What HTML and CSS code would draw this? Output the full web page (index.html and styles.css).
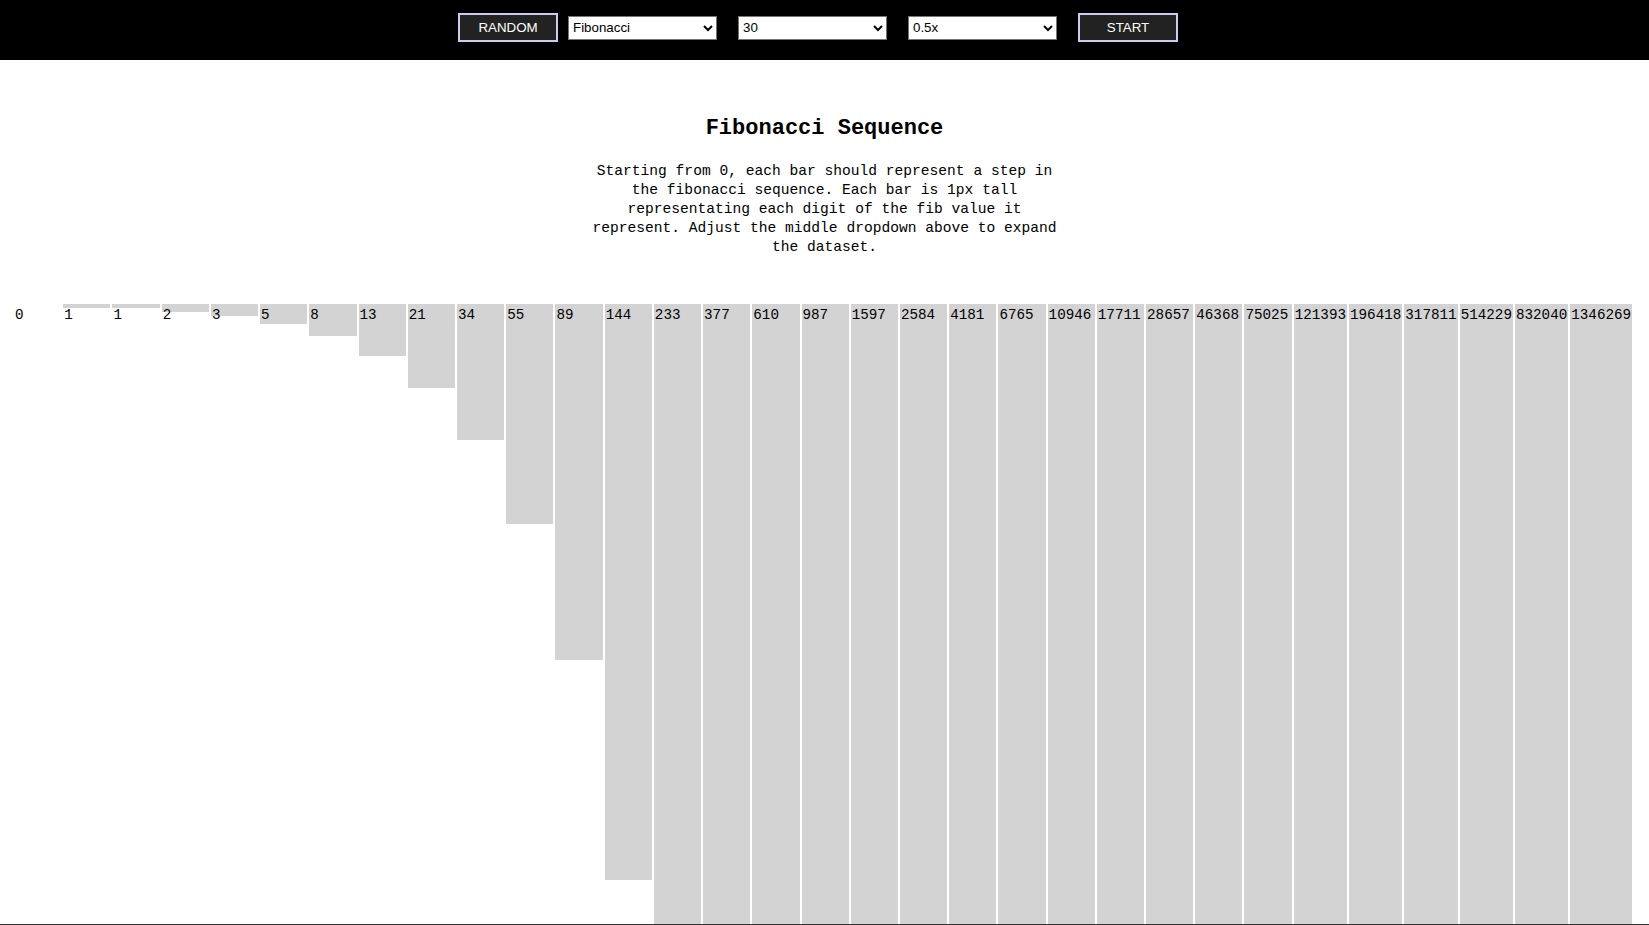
FILE: index.html
```html
<!DOCTYPE html>
<html lang="en">
<head>
<meta charset="utf-8">
<title>Fibonacci Sequence</title>
<link rel="stylesheet" href="styles.css">
</head>
<body>
<header class="toolbar">
  <button class="btn" type="button">RANDOM</button>
  <select class="dropdown dropdown-first">
    <option>Fibonacci</option>
  </select>
  <select class="dropdown dropdown-next">
    <option>30</option>
  </select>
  <select class="dropdown dropdown-next">
    <option>0.5x</option>
  </select>
  <button class="btn btn-next" type="button">START</button>
</header>
<main class="content">
  <h1 class="title">Fibonacci Sequence</h1>
  <p class="description">Starting from 0, each bar should represent a step in the fibonacci sequence. Each bar is 1px tall representating each digit of the fib value it represent. Adjust the middle dropdown above to expand the dataset.</p>
  <div class="chart">
    <div class="bar" style="height:0px"><span class="bar-label">0</span></div>
    <div class="bar" style="height:4px"><span class="bar-label">1</span></div>
    <div class="bar" style="height:4px"><span class="bar-label">1</span></div>
    <div class="bar" style="height:8px"><span class="bar-label">2</span></div>
    <div class="bar" style="height:12px"><span class="bar-label">3</span></div>
    <div class="bar" style="height:20px"><span class="bar-label">5</span></div>
    <div class="bar" style="height:32px"><span class="bar-label">8</span></div>
    <div class="bar" style="height:52px"><span class="bar-label">13</span></div>
    <div class="bar" style="height:84px"><span class="bar-label">21</span></div>
    <div class="bar" style="height:136px"><span class="bar-label">34</span></div>
    <div class="bar" style="height:220px"><span class="bar-label">55</span></div>
    <div class="bar" style="height:356px"><span class="bar-label">89</span></div>
    <div class="bar" style="height:576px"><span class="bar-label">144</span></div>
    <div class="bar" style="height:932px"><span class="bar-label">233</span></div>
    <div class="bar" style="height:1508px"><span class="bar-label">377</span></div>
    <div class="bar" style="height:2440px"><span class="bar-label">610</span></div>
    <div class="bar" style="height:3948px"><span class="bar-label">987</span></div>
    <div class="bar" style="height:6388px"><span class="bar-label">1597</span></div>
    <div class="bar" style="height:10336px"><span class="bar-label">2584</span></div>
    <div class="bar" style="height:16724px"><span class="bar-label">4181</span></div>
    <div class="bar" style="height:27060px"><span class="bar-label">6765</span></div>
    <div class="bar" style="height:43784px"><span class="bar-label">10946</span></div>
    <div class="bar" style="height:70844px"><span class="bar-label">17711</span></div>
    <div class="bar" style="height:114628px"><span class="bar-label">28657</span></div>
    <div class="bar" style="height:185472px"><span class="bar-label">46368</span></div>
    <div class="bar" style="height:300100px"><span class="bar-label">75025</span></div>
    <div class="bar" style="height:485572px"><span class="bar-label">121393</span></div>
    <div class="bar" style="height:785672px"><span class="bar-label">196418</span></div>
    <div class="bar" style="height:1271244px"><span class="bar-label">317811</span></div>
    <div class="bar" style="height:2056916px"><span class="bar-label">514229</span></div>
    <div class="bar" style="height:3328160px"><span class="bar-label">832040</span></div>
    <div class="bar" style="height:5385076px"><span class="bar-label">1346269</span></div>
  </div>
</main>
</body>
</html>
```

FILE: styles.css
```css
html, body {
  margin: 0;
  padding: 0;
  background: #ffffff;
}

body {
  font-family: "Liberation Mono", "DejaVu Sans Mono", monospace;
  color: #000000;
  overflow: hidden;
}

.toolbar {
  height: 60px;
  box-sizing: border-box;
  background: #000000;
  display: flex;
  align-items: center;
  justify-content: center;
  padding: 0 13px 5px 0;
}

.btn {
  width: 100px;
  height: 29px;
  box-sizing: border-box;
  background: #222222;
  color: #ffffff;
  border: 2px solid #cbcdf0;
  border-radius: 0;
  font-family: "Liberation Sans", Arial, sans-serif;
  font-size: 13.33px;
  padding: 0;
  margin: 0;
}

.btn-next {
  margin-left: 21px;
}

.dropdown {
  width: 149px;
  height: 24px;
  box-sizing: border-box;
  font-family: "Liberation Sans", Arial, sans-serif;
  font-size: 13.33px;
  color: #000000;
  background-color: #ffffff;
  border: 1px solid #767676;
  border-radius: 0;
  margin: 0;
}

.dropdown-first {
  margin-left: 10px;
}

.dropdown-next {
  margin-left: 21px;
}

.content {
  display: flex;
  flex-direction: column;
  align-items: center;
}

.title {
  margin: 56px 0 0;
  font-size: 22px;
  line-height: 26px;
  font-weight: bold;
  text-align: center;
}

.description {
  margin: 20px 0 0;
  width: 54ch;
  font-size: 14.6px;
  line-height: 19px;
  text-align: center;
}

.chart {
  align-self: stretch;
  margin-top: 47px;
  height: 620px;
  overflow: hidden;
  border-bottom: 1px solid #333333;
  display: flex;
  align-items: flex-start;
  padding: 0 16px 0 13px;
}

.bar {
  flex: 1 1 0;
  margin: 0 1px;
  background: #d3d3d3;
}

.bar-label {
  display: block;
  padding: 3px 1px 0;
  font-size: 14.25px;
  line-height: 17px;
  white-space: nowrap;
}
```
